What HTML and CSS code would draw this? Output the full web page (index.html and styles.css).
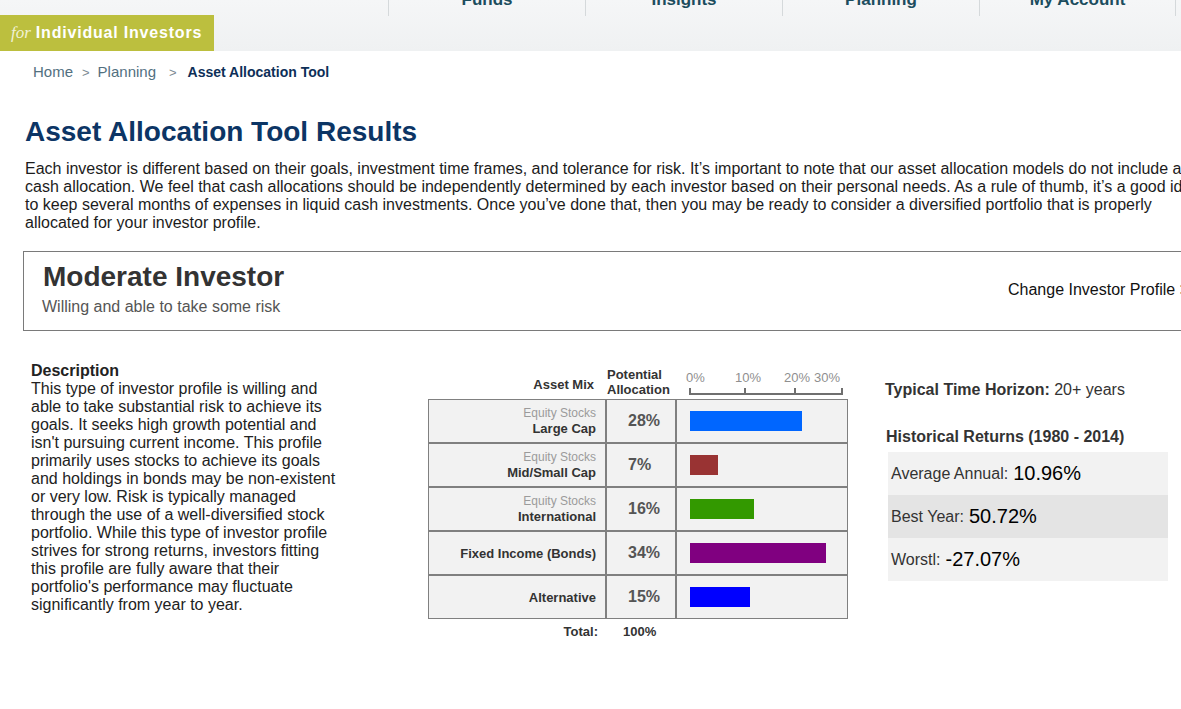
FILE: index.html
```html
<!DOCTYPE html>
<html lang="en">
<head>
<meta charset="utf-8">
<title>Asset Allocation Tool Results</title>
<link rel="stylesheet" href="styles.css">
</head>
<body>
<div class="page">
  <header class="site-header">
    <nav class="topnav">
      <a class="nav-item" href="#"><span class="nav-text">Funds</span></a>
      <a class="nav-item" href="#"><span class="nav-text">Insights</span></a>
      <a class="nav-item" href="#"><span class="nav-text">Planning</span></a>
      <a class="nav-item nav-last" href="#"><span class="nav-text">My Account</span></a>
    </nav>
    <div class="badge"><span class="badge-for">for</span><span class="badge-text">Individual Investors</span></div>
  </header>

  <div class="breadcrumb">
    <a class="crumb" href="#">Home</a><span class="crumb-sep">&gt;</span><a class="crumb" href="#">Planning</a><span class="crumb-sep crumb-sep-wide">&gt;</span><span class="crumb-current">Asset Allocation Tool</span>
  </div>

  <main class="content">
    <h1 class="title">Asset Allocation Tool Results</h1>
    <p class="intro">Each investor is different based on their goals, investment time frames, and tolerance for risk. It’s important to note that our asset allocation models do not include a cash allocation. We feel that cash allocations should be independently determined by each investor based on their personal needs. As a rule of thumb, it’s a good idea to keep several months of expenses in liquid cash investments. Once you’ve done that, then you may be ready to consider a diversified portfolio that is properly allocated for your investor profile.</p>

    <section class="profile">
      <div class="profile-info">
        <h2 class="profile-name">Moderate Investor</h2>
        <p class="profile-sub">Willing and able to take some risk</p>
      </div>
      <a class="profile-change" href="#">Change Investor Profile &gt;</a>
    </section>

    <section class="results">
      <div class="desc">
        <h3 class="desc-title">Description</h3>
        <p class="desc-text">This type of investor profile is willing and able to take substantial risk to achieve its goals. It seeks high growth potential and isn't pursuing current income. This profile primarily uses stocks to achieve its goals and holdings in bonds may be non-existent or very low. Risk is typically managed through the use of a well-diversified stock portfolio. While this type of investor profile strives for strong returns, investors fitting this profile are fully aware that their portfolio's performance may fluctuate significantly from year to year.</p>
      </div>

      <div class="chart">
        <div class="chart-head">
          <div class="head-mix">Asset Mix</div>
          <div class="head-alloc">Potential<br>Allocation</div>
          <div class="axis">
            <span class="axis-label axis-l0">0%</span>
            <span class="axis-label axis-l10">10%</span>
            <span class="axis-label axis-l20">20%</span>
            <span class="axis-label axis-l30">30%</span>
            <span class="axis-line"></span>
            <span class="axis-tick axis-t0"></span>
            <span class="axis-tick axis-t10"></span>
            <span class="axis-tick axis-t20"></span>
            <span class="axis-tick axis-t30"></span>
          </div>
        </div>
        <div class="chart-table">
          <div class="cell cell-label"><span class="cat">Equity Stocks</span><span class="name">Large Cap</span></div>
          <div class="cell cell-pct">28%</div>
          <div class="cell cell-bar"><span class="bar bar-large" style="width:112px"></span></div>

          <div class="cell cell-label"><span class="cat">Equity Stocks</span><span class="name">Mid/Small Cap</span></div>
          <div class="cell cell-pct">7%</div>
          <div class="cell cell-bar"><span class="bar bar-mid" style="width:28px"></span></div>

          <div class="cell cell-label"><span class="cat">Equity Stocks</span><span class="name">International</span></div>
          <div class="cell cell-pct">16%</div>
          <div class="cell cell-bar"><span class="bar bar-intl" style="width:64px"></span></div>

          <div class="cell cell-label"><span class="name">Fixed Income (Bonds)</span></div>
          <div class="cell cell-pct">34%</div>
          <div class="cell cell-bar"><span class="bar bar-fixed" style="width:136px"></span></div>

          <div class="cell cell-label"><span class="name">Alternative</span></div>
          <div class="cell cell-pct">15%</div>
          <div class="cell cell-bar"><span class="bar bar-alt" style="width:60px"></span></div>
        </div>
        <div class="chart-total">
          <div class="total-label">Total:</div>
          <div class="total-value">100%</div>
        </div>
      </div>

      <div class="stats">
        <p class="horizon"><strong>Typical Time Horizon:</strong> 20+ years</p>
        <h3 class="hist-title">Historical Returns (1980 - 2014)</h3>
        <div class="hist-table">
          <div class="hist-row">Average Annual:<span class="hist-val">10.96%</span></div>
          <div class="hist-row hist-row-alt">Best Year:<span class="hist-val">50.72%</span></div>
          <div class="hist-row">Worstl:<span class="hist-val">-27.07%</span></div>
        </div>
      </div>
    </section>
  </main>
</div>
</body>
</html>
```

FILE: styles.css
```css
html, body {
  margin: 0;
  padding: 0;
  overflow: hidden;
  background: #fff;
}

body {
  font-family: "Liberation Sans", Arial, Helvetica, sans-serif;
  color: #222;
}

.page {
  width: 1240px;
}

a {
  text-decoration: none;
  color: inherit;
}

/* Header */
.site-header {
  height: 51px;
  background: linear-gradient(#f5f6f7, #eff1f2);
  display: flex;
  flex-direction: column;
}

.topnav {
  display: flex;
  height: 15px;
  padding-left: 388px;
}

.nav-item {
  box-sizing: border-box;
  width: 197px;
  height: 16px;
  border-left: 1px solid #d5d9db;
  text-align: center;
  color: #1c4d5e;
}

.nav-last {
  border-right: 1px solid #d5d9db;
}

.nav-text {
  display: block;
  margin-top: -10px;
  font-size: 17px;
  line-height: 20px;
  font-weight: bold;
}

.badge {
  width: 214px;
  height: 36px;
  box-sizing: border-box;
  background: #bcbf3e;
  display: flex;
  align-items: center;
  padding-left: 11px;
  color: #fff;
}

.badge-for {
  font-family: "Liberation Serif", "Times New Roman", serif;
  font-style: italic;
  font-size: 17px;
  color: #f1f2d6;
  margin-right: 5px;
}

.badge-text {
  font-weight: bold;
  font-size: 16px;
  letter-spacing: 0.8px;
}

/* Breadcrumb */
.breadcrumb {
  padding: 12px 0 0 33px;
  font-size: 15px;
  line-height: 18px;
  height: 18px;
  display: flex;
  align-items: baseline;
}

.crumb {
  color: #52707f;
}

.crumb-sep {
  color: #7c8a93;
  font-size: 13px;
  margin: 0 8px 0 9px;
}

.crumb-sep-wide {
  margin: 0 11px 0 13px;
}

.crumb-current {
  color: #0d2f58;
  font-weight: bold;
  font-size: 14px;
}

/* Content */
.content {
  padding-left: 25px;
  width: 1185px;
}

.title {
  margin: 35px 0 0;
  font-size: 28px;
  line-height: 32px;
  font-weight: bold;
  color: #0c3565;
}

.intro {
  margin: 12px 0 0;
  font-size: 16px;
  line-height: 18px;
  color: #1c1c1c;
}

.profile {
  margin: 19px 0 0 -2px;
  border: 1px solid #7a7a7a;
  display: flex;
  justify-content: space-between;
  align-items: center;
  padding: 9px 21px 14px 19px;
}

.profile-name {
  margin: 0;
  font-size: 28px;
  line-height: 32px;
  font-weight: bold;
  color: #333;
}

.profile-sub {
  margin: 5px 0 0 -1px;
  font-size: 16px;
  line-height: 18px;
  color: #555;
}

.profile-change {
  margin-top: 3px;
  margin-right: -1px;
  font-size: 16px;
  line-height: 18px;
  color: #111;
}

/* Results */
.results {
  display: flex;
  align-items: flex-start;
  margin-top: 31px;
}

.desc {
  width: 312px;
  margin-left: 6px;
}

.desc-title {
  margin: 0;
  font-size: 16px;
  line-height: 18px;
  font-weight: bold;
  color: #222;
}

.desc-text {
  margin: 0;
  font-size: 16px;
  line-height: 18px;
  color: #222;
}

/* Chart */
.chart {
  width: 420px;
  margin-left: 85px;
}

.chart-head {
  display: grid;
  grid-template-columns: 178px 70px 172px;
  height: 37px;
}

.head-mix {
  align-self: end;
  text-align: right;
  padding: 0 12px 7px 0;
  font-size: 13px;
  line-height: 15px;
  font-weight: bold;
  color: #333;
}

.head-alloc {
  align-self: end;
  padding: 0 0 2px 1px;
  font-size: 13px;
  line-height: 15px;
  font-weight: bold;
  color: #333;
}

.axis {
  position: relative;
}

.axis-label {
  position: absolute;
  top: 8px;
  font-size: 13px;
  line-height: 15px;
  color: #8f8f8f;
}

.axis-l0 { left: 10px; }
.axis-l10 { left: 59px; }
.axis-l20 { left: 108px; }
.axis-l30 { left: 138px; }

.axis-line {
  position: absolute;
  left: 13px;
  top: 31px;
  width: 154px;
  height: 2px;
  background: #6f6f6f;
}

.axis-tick {
  position: absolute;
  top: 26px;
  width: 2px;
  height: 7px;
  background: #6f6f6f;
}

.axis-t0 { left: 13px; }
.axis-t10 { left: 68px; }
.axis-t20 { left: 118px; }
.axis-t30 { left: 165px; }

.chart-table {
  display: grid;
  grid-template-columns: 176px 68px 170px;
  grid-auto-rows: 42px;
  gap: 2px;
  padding: 1px;
  background: #808080;
}

.cell {
  background: #f2f2f2;
  display: flex;
}

.cell-label {
  flex-direction: column;
  justify-content: center;
  align-items: flex-end;
  padding-right: 9px;
}

.cat {
  font-size: 12px;
  line-height: 15px;
  color: #9b9b9b;
}

.name {
  font-size: 13px;
  line-height: 15px;
  font-weight: bold;
  color: #333;
}

.cell-pct {
  align-items: center;
  padding-left: 21px;
  font-size: 16px;
  font-weight: bold;
  color: #555;
}

.cell-bar {
  align-items: center;
  padding-left: 13px;
}

.bar {
  display: block;
  height: 20px;
}

.bar-large { background: #0066ff; }
.bar-mid { background: #993333; }
.bar-intl { background: #339900; }
.bar-fixed { background: #800080; }
.bar-alt { background: #0000ff; }

.chart-total {
  display: grid;
  grid-template-columns: 178px 70px;
  margin-top: 5px;
  font-size: 13px;
  line-height: 15px;
  font-weight: bold;
  color: #333;
}

.total-label {
  text-align: right;
  padding-right: 8px;
}

.total-value {
  padding-left: 17px;
}

/* Stats */
.stats {
  margin-left: 37px;
  padding-top: 19px;
  width: 290px;
}

.horizon {
  margin: 0;
  font-size: 16px;
  line-height: 18px;
  color: #333;
}

.horizon strong {
  color: #333;
}

.hist-title {
  margin: 29px 0 0 1px;
  font-size: 16px;
  line-height: 18px;
  font-weight: bold;
  color: #333;
}

.hist-table {
  margin: 6px 0 0 3px;
  width: 280px;
}

.hist-row {
  height: 43px;
  display: flex;
  align-items: center;
  gap: 5px;
  padding-left: 3px;
  background: #f2f2f2;
  font-size: 16px;
  color: #333;
}

.hist-row-alt {
  background: #e4e4e4;
}

.hist-val {
  font-size: 20px;
  color: #000;
}
```
